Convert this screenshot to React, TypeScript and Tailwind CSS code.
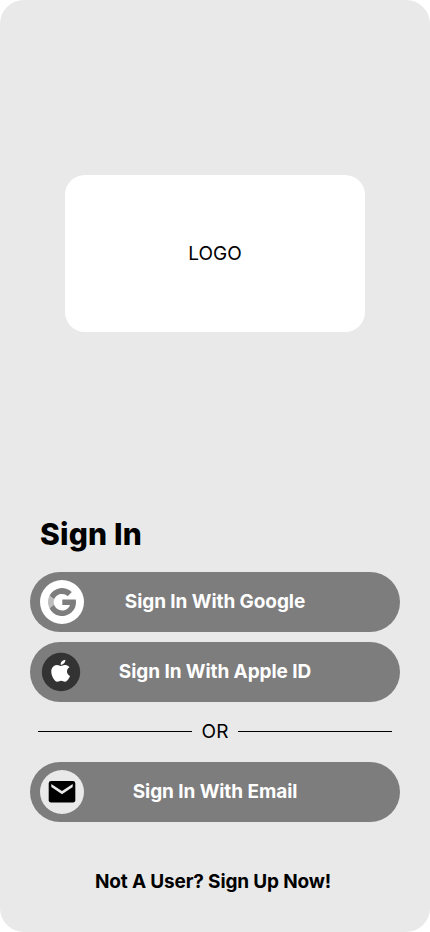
import type { ReactNode } from "react";

function GoogleIcon() {
  return (
    <svg width="44" height="44" viewBox="0 0 44 44" fill="none">
      <circle cx="22" cy="22" r="22" fill="#fff" />
      <path d="M31.8 12.1A14 14 0 0 0 9.5 15.7L14.1 19.2A8.4 8.4 0 0 1 27.7 16.2Z" fill="#7d7d7d" />
      <path d="M9.5 15.7A14 14 0 0 0 9.5 28.3L14.1 24.8A8.4 8.4 0 0 1 14.1 19.2Z" fill="#bdbdbd" />
      <path d="M9.5 28.3A14 14 0 0 0 31.4 32.4Q36 28.4 36 22.2Q36 20.8 35.7 19.5H22.3V24.9H30Q29.4 27.3 27 28.9A8.4 8.4 0 0 1 14.1 24.8Z" fill="#7d7d7d" />
    </svg>
  );
}

function AppleIcon() {
  return (
    <svg width="44" height="44" viewBox="0 0 44 44">
      <circle cx="21" cy="22" r="19.2" fill="#333" />
      <g transform="translate(6.8 7.5) scale(1.16 1.1)" fill="#fff">
        <path d="M18.71 19.5c-.83 1.24-1.71 2.45-3.05 2.47-1.34.03-1.77-.79-3.29-.79-1.53 0-2 .77-3.27.82-1.31.05-2.3-1.32-3.14-2.53C4.25 17 2.94 12.45 4.7 9.39c.87-1.52 2.43-2.48 4.12-2.51 1.28-.02 2.5.87 3.29.87.78 0 2.26-1.07 3.81-.91.65.03 2.47.26 3.64 1.98-.09.06-2.17 1.28-2.15 3.81.03 3.02 2.65 4.03 2.68 4.04-.03.07-.42 1.44-1.38 2.83M13 3.5c.73-.83 1.94-1.46 2.94-1.5.13 1.17-.34 2.35-1.04 3.19-.69.85-1.83 1.51-2.95 1.42-.15-1.15.41-2.35 1.05-3.11z" />
      </g>
    </svg>
  );
}

function MailIcon() {
  return (
    <svg width="44" height="44" viewBox="0 0 44 44">
      <circle cx="22" cy="22" r="22" fill="#e9e9e9" />
      <rect x="8.7" y="11" width="26.6" height="21.6" rx="2.4" fill="#000" />
      <path d="M11.3 14L22 21L32.7 14V16.9L22 24.2L11.3 16.9Z" fill="#e9e9e9" />
    </svg>
  );
}

function SignInButton({ icon, children }: { icon: ReactNode; children: ReactNode }) {
  return (
    <button className="grid h-[60px] w-full grid-cols-[44px_1fr_44px] items-center rounded-full bg-[#7d7d7d] px-2.5 text-white">
      {icon}
      <span className="whitespace-nowrap text-center text-[19px] leading-6 font-bold tracking-[-0.08px]">{children}</span>
    </button>
  );
}

export default function App() {
  return (
    <div className="bg-white">
      <main className="flex h-[932px] w-[430px] flex-col rounded-[24px] bg-[#e9e9e9] px-[30px] pt-[175px] font-['Inter',sans-serif] text-black">
        <div className="flex h-[157px] w-[300px] shrink-0 items-center justify-center self-center rounded-[20px] bg-white pt-px text-[19px]">
          LOGO
        </div>
        <h1 className="mt-[182px] ml-2.5 h-10 shrink-0 text-[30px] leading-10 font-extrabold tracking-[0.2px]">Sign In</h1>
        <div className="mt-[18px] flex flex-col gap-2.5">
          <SignInButton icon={<GoogleIcon />}>Sign In With Google</SignInButton>
          <SignInButton icon={<AppleIcon />}>Sign In With Apple ID</SignInButton>
          <div className="flex h-10 items-center px-2">
            <span className="mb-px h-px flex-1 bg-black" />
            <span className="w-[46px] text-center text-[19px] leading-6">OR</span>
            <span className="mb-px h-px flex-1 bg-black" />
          </div>
          <SignInButton icon={<MailIcon />}>Sign In With Email</SignInButton>
        </div>
        <a className="mt-12 mr-1 self-center whitespace-nowrap text-[19px] leading-6 font-bold tracking-[-0.16px]">Not A User? Sign Up Now!</a>
      </main>
    </div>
  );
}
